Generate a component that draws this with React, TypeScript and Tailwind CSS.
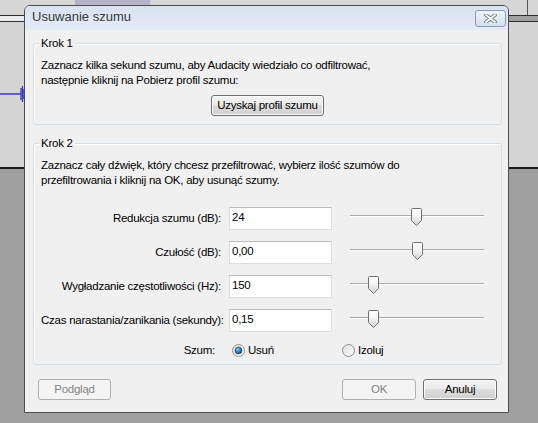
import { useId } from "react";

type Row = { label: string; value: string; thumb: number };

const rows: Row[] = [
  { label: "Redukcja szumu (dB):", value: "24", thumb: 61 },
  { label: "Czułość (dB):", value: "0,00", thumb: 62 },
  { label: "Wygładzanie częstotliwości (Hz):", value: "150", thumb: 18 },
  { label: "Czas narastania/zanikania (sekundy):", value: "0,15", thumb: 18 },
];

const WinButton = ({
  label,
  disabled,
  className = "",
}: {
  label: string;
  disabled?: boolean;
  className?: string;
}) => (
  <button
    type="button"
    className={
      "h-[21px] shrink-0 rounded-[3px] border leading-[19px] " +
      (disabled
        ? "border-[#adb2b5] bg-[#f4f4f4] text-[#838383] "
        : "border-[#707070] bg-[linear-gradient(#f2f2f2_0%,#ebebeb_50%,#dddddd_50%,#cfcfcf_100%)] text-black shadow-[inset_0_0_0_1px_#fcfcfc] ") +
      className
    }
  >
    {label}
  </button>
);

const TextBox = ({ value }: { value: string }) => (
  <div className="w-[103px] h-[23px] border border-[#dadde2] border-t-[#b8bbc0] bg-white pl-[2px] pb-[1px] flex items-center">
    {value}
  </div>
);

const Thumb = () => {
  const id = useId();
  return (
    <svg width="11" height="18" viewBox="0 0 11 18" className="block">
      <defs>
        <linearGradient id={id} x1="0" y1="0" x2="0" y2="1">
          <stop offset="0" stopColor="#ffffff" />
          <stop offset="0.45" stopColor="#f4f4f4" />
          <stop offset="1" stopColor="#d3d3d3" />
        </linearGradient>
      </defs>
      <path
        d="M1.5 0.5H9.5Q10.5 0.5 10.5 1.5V12.5L5.5 17.5L0.5 12.5V1.5Q0.5 0.5 1.5 0.5Z"
        fill={`url(#${id})`}
        stroke="#707070"
      />
    </svg>
  );
};

const Slider = ({ thumb }: { thumb: number }) => (
  <div className="relative w-[134px] h-[23px] pt-[8px]">
    <div className="h-[2px] bg-[linear-gradient(#a9a9a9_50%,#ffffff_50%)]" />
    <div className="absolute top-[1px]" style={{ left: thumb }}>
      <Thumb />
    </div>
  </div>
);

const Radio = ({ checked, label }: { checked?: boolean; label: string }) => {
  const id = useId();
  return (
    <div className="flex items-center gap-[3px]">
      <svg width="13" height="13" viewBox="0 0 13 13" className="block">
        <defs>
          <linearGradient id={id + "r"} x1="0" y1="0" x2="1" y2="1">
            <stop offset="0" stopColor="#dcdcdc" />
            <stop offset="1" stopColor="#ffffff" />
          </linearGradient>
          <radialGradient id={id + "d"} cx="0.4" cy="0.35" r="0.7">
            <stop offset="0" stopColor="#8fd0f5" />
            <stop offset="0.5" stopColor="#2d7fc0" />
            <stop offset="1" stopColor="#14416d" />
          </radialGradient>
        </defs>
        <circle cx="6.5" cy="6.5" r="6" fill={`url(#${id}r)`} stroke="#8e8f8f" />
        {checked && (
          <circle cx="6.5" cy="6.5" r="3.5" fill={`url(#${id}d)`} stroke="#1d4a73" strokeWidth="0.6" />
        )}
      </svg>
      <span>{label}</span>
    </div>
  );
};

const GroupBox = ({
  title,
  className = "",
  children,
}: {
  title: string;
  className?: string;
  children: React.ReactNode;
}) => (
  <fieldset
    className={
      "w-[469px] shrink-0 rounded-[3px] border border-[#d5dfe5] shadow-[inset_1px_1px_0_#ffffff] pl-[7px] pr-[7px] " +
      className
    }
  >
    <legend className="ml-[-2px] px-[2px] leading-[14px] bg-[#f0f0f0]">{title}</legend>
    {children}
  </fieldset>
);

const CloseGlyph = () => (
  <svg width="13" height="9" viewBox="0 0 13 9" className="block">
    <path d="M2 1L11 8M11 1L2 8" stroke="#6d7683" strokeWidth="3.6" strokeLinecap="round" />
    <path d="M2 1L11 8M11 1L2 8" stroke="#ffffff" strokeWidth="1.8" strokeLinecap="round" />
  </svg>
);

const Waveform = () => (
  <svg width="26" height="16" viewBox="0 0 26 16" className="block">
    <path d="M0 8H21" stroke="#3b3bc4" strokeWidth="1.5" />
    <path d="M21 2V14M22.5 0V16M24 3V13" stroke="#3b3bc4" strokeWidth="1.3" />
  </svg>
);

export default function App() {
  return (
    <div className="relative w-[538px] h-[423px] overflow-hidden flex flex-col bg-[#a0a0a0] font-['Liberation_Sans',Arial,sans-serif] text-[11.5px] tracking-[-0.25px] text-black">
      {/* Audacity main window behind the dialog */}
      <div className="h-[15px] shrink-0 flex bg-[#d6d6d6]">
        <div className="ml-[75px] w-[75px] h-[5px] bg-[#b4b3c7]" />
        <div className="flex-1" />
        <div className="w-[1px] bg-[#555555]" />
        <div className="w-[10px]" />
      </div>
      <div className="h-[7px] shrink-0 flex border-y border-[#303030]">
        <div className="flex-1 bg-[#ececec]" />
        <div className="w-[260px] bg-[#a0a0a0]" />
      </div>
      <div className="h-[145px] shrink-0 bg-[#d4d4d4] pt-[64px]">
        <Waveform />
      </div>
      <div className="h-[2px] shrink-0 bg-[#1c1c1c]" />
      <div className="flex-1 bg-[#a0a0a0]" />

      {/* Usuwanie szumu dialog */}
      <div className="absolute left-[24px] top-[5px] w-[485px] h-[408px] flex flex-col rounded-t-[6px] border border-[#4d4d4d] bg-[#f0f0f0] overflow-hidden">
        <div className="h-[24px] shrink-0 flex items-center justify-between pl-[7px] pr-[2px] bg-[linear-gradient(#d8e3f1,#e3ebf6)] text-[#3a3a3a] text-[13px] tracking-[0px]">
          <span className="mt-[-2px]">Usuwanie szumu</span>
          <div className="w-[31px] h-[17px] self-start mt-[4px] rounded-[3px] border border-[#8d9db3] bg-[linear-gradient(#eef3f9,#d5e0ed)] flex items-center justify-center">
            <CloseGlyph />
          </div>
        </div>

        <div className="flex-1 flex flex-col pl-[8px]">
          <GroupBox title="Krok 1" className="mt-[6px] pt-[8px] pb-[8px]">
            <p className="leading-[15px] whitespace-nowrap">
              Zaznacz kilka sekund szumu, aby Audacity wiedziało co odfiltrować,
              <br />
              następnie kliknij na Pobierz profil szumu:
            </p>
            <div className="mt-[7px] flex justify-center">
              <WinButton label="Uzyskaj profil szumu" className="w-[113px]" />
            </div>
          </GroupBox>

          <GroupBox title="Krok 2" className="mt-[11px] pt-[8px] pb-[6px]">
            <p className="leading-[15px] whitespace-nowrap">
              Zaznacz cały dźwięk, który chcesz przefiltrować, wybierz ilość szumów do
              <br />
              przefiltrowania i kliknij na OK, aby usunąć szumy.
            </p>
            <div className="mt-[19px] flex flex-col gap-[11px]">
              {rows.map((r) => (
                <div key={r.label} className="h-[23px] flex items-center">
                  <span className="w-[180px] text-right whitespace-nowrap">{r.label}</span>
                  <div className="ml-[8px]">
                    <TextBox value={r.value} />
                  </div>
                  <div className="ml-[18px]">
                    <Slider thumb={r.thumb} />
                  </div>
                </div>
              ))}
              <div className="h-[15px] flex items-center">
                <span className="w-[174px] text-right">Szum:</span>
                <div className="ml-[17px] w-[110px]">
                  <Radio checked label="Usuń" />
                </div>
                <Radio label="Izoluj" />
              </div>
            </div>
          </GroupBox>

          <div className="mt-[14px] flex pl-[5px] pr-[11px]">
            <WinButton label="Podgląd" disabled className="w-[73px]" />
            <div className="flex-1" />
            <WinButton label="OK" disabled className="w-[74px]" />
            <WinButton label="Anuluj" className="w-[74px] ml-[7px]" />
          </div>
        </div>
      </div>
    </div>
  );
}
